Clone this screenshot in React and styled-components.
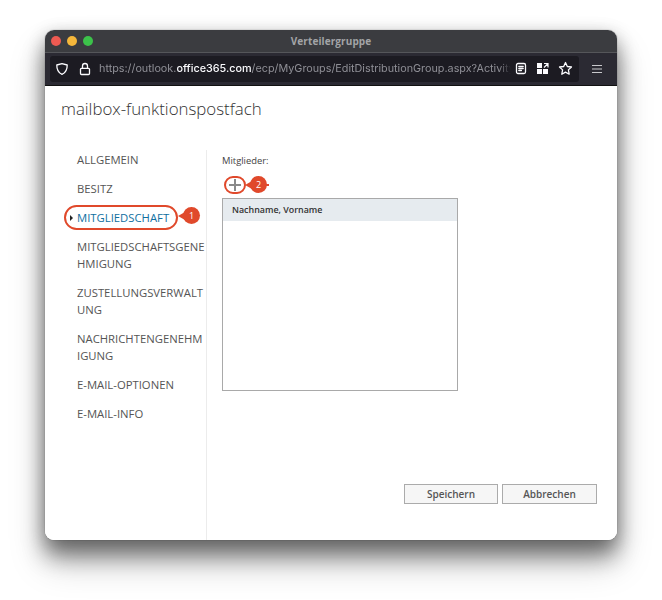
import React from 'react';
import styled, { createGlobalStyle } from 'styled-components';

const Global = createGlobalStyle`
  html, body { margin: 0; padding: 0; background: #fff; }
  body { width: 662px; height: 600px; overflow: hidden; font-family: "Open Sans", "Liberation Sans", sans-serif; }
  * { box-sizing: border-box; }
`;
const Page = styled.div`
  width: 662px; height: 600px; padding: 30px 45px 60px 45px;
`;
const Win = styled.div`
  width: 572px; height: 510px; border-radius: 9px; overflow: hidden; position: relative;
  display: flex; flex-direction: column; background: #fff;
`;
const WinShadow = styled.div`
  border-radius: 9px;
  box-shadow: 0 0 1px rgba(0,0,0,.6), 0 16px 22px rgba(0,0,0,.42), 0 22px 36px rgba(0,0,0,.22), 0 4px 18px rgba(0,0,0,.2);
`;
const TitleBar = styled.div`
  height: 23px; flex: none; background: #3b3c40; display: flex; align-items: center; position: relative;
  padding-left: 6px; gap: 6px; border-bottom: 1px solid #55565a;
`;
const Dot = styled.span`
  width: 10px; height: 10px; border-radius: 50%; background: ${p => p.$c};
`;
const Title = styled.div`
  position: absolute; left: 0; right: 0; top: 0; text-align: center;
  font: 700 10px/22px "Open Sans", sans-serif; color: #a3a4a7; letter-spacing: .1px;
`;
const Toolbar = styled.div`
  height: 33px; flex: none; background: #2b2a33; display: flex; align-items: center; padding: 0 0 1px 5px;
  border-bottom: 1px solid #111;
`;
const UrlBar = styled.div`
  width: 529px; height: 26px; background: #1c1b22; border-radius: 3px; display: flex; align-items: center;
  padding-left: 5px; color: #fbfbfe; flex: none;
`;
const LockIcon = styled.svg`
  margin-left: 9px;
`;
const Url = styled.div`
  width: 412px; margin-left: 7px; font: 400 10.8px "Inter", "Liberation Sans", sans-serif; color: #8f8f96;
  white-space: nowrap; overflow: hidden;
  mask-image: linear-gradient(to right, #000 97%, transparent);
  b { font-weight: 500; color: #fbfbfe; }
`;
const UrlIcons = styled.div`
  display: flex; align-items: center; margin-left: 4px; gap: 9px;
`;
const Menu = styled.div`
  margin-left: 12px; display: flex; color: #c8c8cc;
`;
const Body = styled.div`
  flex: 1; display: flex; flex-direction: column; background: #fff; min-height: 0;
`;
const Heading = styled.h1`
  margin: 11px 0 0 16px; height: 53px; font: 300 16.85px/24px "Open Sans", sans-serif; color: #333; flex: none;
`;
const Columns = styled.div`
  flex: 1; display: flex; min-height: 0;
`;
const Side = styled.nav`
  width: 162px; flex: none; border-right: 1px solid #ececec; padding: 1px 0 0 32px;
  display: flex; flex-direction: column; gap: 12px; position: relative;
`;
const NavItem = styled.div`
  font: 400 11.3px/17px "Open Sans", sans-serif; color: ${p => p.$active ? '#0f6f9f' : '#555'};
  position: relative; white-space: nowrap;
`;
const Caret = styled.span`
  position: absolute; left: -7px; top: 6px; width: 0; height: 0;
  border-left: 3.5px solid #222; border-top: 3px solid transparent; border-bottom: 3px solid transparent;
`;
const Main = styled.main`
  flex: 1; padding: 0 20px 36px 15px; display: flex; flex-direction: column; position: relative;
`;
const Label = styled.div`
  font: 400 9.4px/22px "Open Sans", sans-serif; color: #444; height: 22px; flex: none;
`;
const AddRow = styled.div`
  height: 26px; flex: none; padding-left: 7px; display: flex; align-items: center; color: #8a8a8a;
`;
const ListBox = styled.div`
  width: 236px; height: 193px; flex: none; border: 1px solid #a9a9a9;
`;
const ListHead = styled.div`
  height: 22px; background: #e6ebef; padding-left: 9px;
  font: 600 8.9px/22px "Open Sans", sans-serif; color: #333;
`;
const Buttons = styled.div`
  margin-top: auto; display: flex; justify-content: flex-end; gap: 4px;
`;
const Btn = styled.button`
  width: ${p => p.$w}px; height: 20px; border: 1px solid #ababab; background: #f6f6f6; padding: 0;
  font: 600 10px/18px "Open Sans", sans-serif; color: #555;
`;
const Ring = styled.div`
  position: absolute; border: 2px solid #e0492b; border-radius: ${p => p.$r}px;
  width: ${p => p.$w}px; height: ${p => p.$h}px; left: ${p => p.$x}px; top: ${p => p.$y}px;
`;
const Badge = styled.div`
  position: absolute; left: ${p => p.$x}px; top: ${p => p.$y}px; width: 17px; height: 17px; border-radius: 50%;
  background: #e0492b; color: #fff; font: 400 9px/17px "Open Sans", sans-serif; text-align: center;
  &::before {
    content: ''; position: absolute; left: -5px; top: 4.5px; width: 0; height: 0;
    border-right: 7px solid #e0492b; border-top: 4px solid transparent; border-bottom: 4px solid transparent;
  }
`;
const Tail = styled.div`
  position: absolute; left: ${p => p.$x}px; top: ${p => p.$y}px; width: 4px; height: 1.5px; background: #e0492b;
`;

const I = { fill: 'none', stroke: 'currentColor', strokeWidth: 1.3, strokeLinejoin: 'round', strokeLinecap: 'round' };

export default function App() {
  return (
    <Page>
      <Global />
      <WinShadow>
        <Win>
          <TitleBar>
            <Dot $c="#ee5a52" /><Dot $c="#f5b73b" /><Dot $c="#3cc24a" />
            <Title>Verteilergruppe</Title>
          </TitleBar>
          <Toolbar>
            <UrlBar>
              <svg width="14" height="14" viewBox="0 0 14 14" {...I}>
                <path d="M7 1.600 12.200 3c.1 4.200-1.400 7.700-5.200 9.400C3.200 10.700 1.700 7.200 1.800 3Z" />
              </svg>
              <LockIcon width="14" height="14" viewBox="0 0 14 14" {...I}>
                <rect x="2.500" y="6.300" width="9" height="6.200" rx="1" />
                <path d="M4.500 6.300V4a2.500 2.500 0 0 1 5 0v2.300" />
              </LockIcon>
              <Url>https://outlook.<b>office365.com</b>/ecp/MyGroups/EditDistributionGroup.aspx?ActivityCorrelationID=1</Url>
              <UrlIcons>
                <svg width="12" height="13" viewBox="0 0 12 13" {...I}>
                  <rect x="1.500" y="1.500" width="9" height="10" rx="1.500" />
                  <path d="M3.800 4.500h4.400M3.800 6.500h4.400M3.800 8.500h2.600" />
                </svg>
                <svg width="13" height="13" viewBox="0 0 13 13" fill="#fbfbfe">
                  <rect x="1" y="1" width="5" height="5" />
                  <rect x="1" y="7" width="5" height="5" />
                  <rect x="7" y="7" width="5" height="5" />
                  <path d="M8 1.500h4v4M12 1.500 8 5.500" fill="none" stroke="#fbfbfe" strokeWidth="1.200" />
                </svg>
                <svg width="15" height="15" viewBox="0 0 15 15" {...I}>
                  <path d="M7.500 1.500 9.300 5.500l4.200.5-3.100 2.900.8 4.300-3.700-2.100-3.700 2.100.8-4.300L1.500 6l4.200-.5Z" />
                </svg>
              </UrlIcons>
            </UrlBar>
            <Menu>
              <svg width="12" height="10" viewBox="0 0 12 10" stroke="currentColor" strokeWidth="1.200">
                <path d="M1 1.500h10M1 5h10M1 8.500h10" />
              </svg>
            </Menu>
          </Toolbar>
          <Body>
            <Heading>mailbox-funktionspostfach</Heading>
            <Columns>
              <Side>
                <NavItem>ALLGEMEIN</NavItem>
                <NavItem>BESITZ</NavItem>
                <NavItem $active><Caret />MITGLIEDSCHAFT</NavItem>
                <NavItem>MITGLIEDSCHAFTSGENE<br />HMIGUNG</NavItem>
                <NavItem>ZUSTELLUNGSVERWALT<br />UNG</NavItem>
                <NavItem>NACHRICHTENGENEHM<br />IGUNG</NavItem>
                <NavItem>E-MAIL-OPTIONEN</NavItem>
                <NavItem>E-MAIL-INFO</NavItem>
              </Side>
              <Main>
                <Label>Mitglieder:</Label>
                <AddRow>
                  <svg width="12" height="12" viewBox="0 0 12 12" stroke="currentColor" strokeWidth="2">
                    <path d="M6 0v12M0 6h12" />
                  </svg>
                </AddRow>
                <ListBox><ListHead>Nachname, Vorname</ListHead></ListBox>
                <Buttons>
                  <Btn $w={94}>Speichern</Btn>
                  <Btn $w={95}>Abbrechen</Btn>
                </Buttons>
              </Main>
            </Columns>
            <Ring $x={19} $y={175} $w={114} $h={25} $r={13} />
            <Badge $x={138} $y={177}>1</Badge>
            <Ring $x={179} $y={146} $w={22} $h={18} $r={9} />
            <Badge $x={205} $y={146}>2</Badge>
            <Tail $x={220} $y={154} />
          </Body>
        </Win>
      </WinShadow>
    </Page>
  );
}
